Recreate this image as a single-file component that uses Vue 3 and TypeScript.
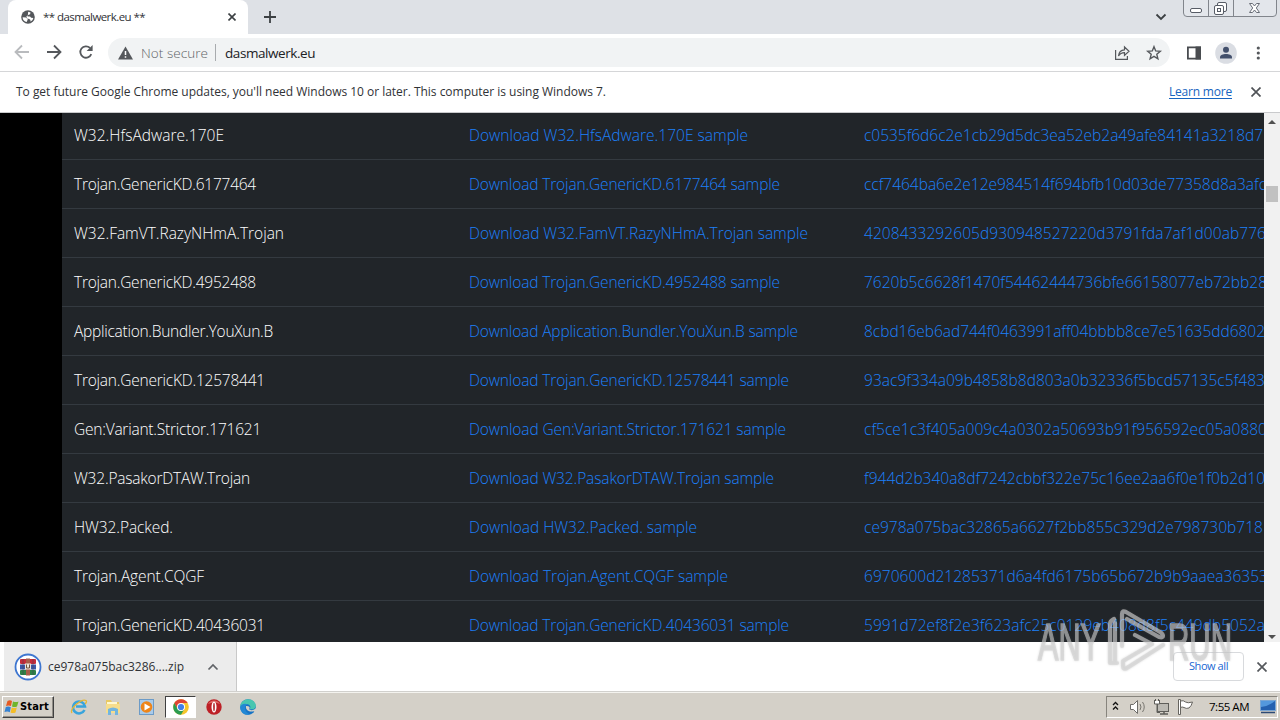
<script setup lang="ts">
interface Sample { name: string; nameW: number; dlW: number; hash: string; hashW: number }

const samples: Sample[] = [
  { name: 'W32.HfsAdware.170E', nameW: 150, dlW: 279, hash: 'c0535f6d6c2e1cb29d5dc3ea52eb2a49afe84141a3218d7', hashW: 399 },
  { name: 'Trojan.GenericKD.6177464', nameW: 182, dlW: 311, hash: 'ccf7464ba6e2e12e984514f694bfb10d03de77358d8a3afc', hashW: 402 },
  { name: 'W32.FamVT.RazyNHmA.Trojan', nameW: 210, dlW: 339, hash: '4208433292605d930948527220d3791fda7af1d00ab776', hashW: 402 },
  { name: 'Trojan.GenericKD.4952488', nameW: 182, dlW: 311, hash: '7620b5c6628f1470f54462444736bfe66158077eb72bb28', hashW: 403 },
  { name: 'Application.Bundler.YouXun.B', nameW: 199, dlW: 329, hash: '8cbd16eb6ad744f0463991aff04bbbb8ce7e51635dd6802', hashW: 401 },
  { name: 'Trojan.GenericKD.12578441', nameW: 191, dlW: 320, hash: '93ac9f334a09b4858b8d803a0b32336f5bcd57135c5f483', hashW: 401 },
  { name: 'Gen:Variant.Strictor.171621', nameW: 187, dlW: 317, hash: 'cf5ce1c3f405a009c4a0302a50693b91f956592ec05a0880', hashW: 403 },
  { name: 'W32.PasakorDTAW.Trojan', nameW: 176, dlW: 305, hash: 'f944d2b340a8df7242cbbf322e75c16ee2aa6f0e1f0b2d10', hashW: 401 },
  { name: 'HW32.Packed.', nameW: 99, dlW: 228, hash: 'ce978a075bac32865a6627f2bb855c329d2e798730b718', hashW: 399 },
  { name: 'Trojan.Agent.CQGF', nameW: 130, dlW: 259, hash: '6970600d21285371d6a4fd6175b65b672b9b9aaea36353', hashW: 404 },
  { name: 'Trojan.GenericKD.40436031', nameW: 191, dlW: 320, hash: '5991d72ef8f2e3f623afc25c0129eb408d8f5c449db5052a', hashW: 401 },
]

// Tracks a label so that it occupies the given width.
const vFit = {
  mounted(el: HTMLElement, binding: { value: number }) {
    const natural = el.getBoundingClientRect().width
    const count = (el.textContent || '').length
    el.style.letterSpacing = `${(binding.value - natural) / count}px`
  },
}
</script>

<template>
  <div class="screen">
    <header class="tabs">
      <div class="tab">
        <svg class="globe" width="14" height="14" viewBox="0 0 14 14"><circle cx="7" cy="7" r="6.8" fill="#54575b" /><path d="M1.6 7.2 5 7.600l1.800 1.600-1.100 2.700C3.400 11.700 1.700 10 1.600 7.200zM7.200 1.700l2.300.8-.4 1.800-2 .6-.6 1.600 2.500.1 1.200 1.200 2.100.2c-.3 1.600-1.400 3-3 3.600l.2-1.600-1.300-1.100-2-.4-.9-2 1.500-1.100z" fill="#fff" /></svg>
        <span class="tabtext"><span v-fit="102">** dasmalwerk.eu **</span></span>
        <svg class="tabx" width="8" height="8" viewBox="0 0 8 8"><path d="m.5.5 7 7m0-7-7 7" stroke="#3c4043" stroke-width="1.6" /></svg>
      </div>
      <svg class="plus" width="12" height="12" viewBox="0 0 12 12"><path d="M6 0v12M0 6h12" stroke="#3c4043" stroke-width="1.8" /></svg>
      <svg class="caret" width="12" height="8" viewBox="0 0 12 8"><path d="m1.5 1.5 4.5 4.5 4.5-4.5" fill="none" stroke="#3c4043" stroke-width="1.8" /></svg>
      <svg class="winbtns" width="94" height="18" viewBox="0 0 94 18">
        <path d="M.5 0v13q0 3.5 3.500 3.500h86q3.500 0 3.500-3.500V0M25.500 0v16M50.500 0v16" fill="#e3e6eb" stroke="#81858c" />
        <rect x="7.500" y="8.500" width="11" height="4" rx="1.500" fill="#fff" stroke="#575c66" />
        <rect x="34.500" y="2.500" width="9" height="9" rx="1.500" fill="#fff" stroke="#575c66" /><rect x="31.500" y="5.500" width="9" height="9" rx="1.500" fill="#fff" stroke="#575c66" /><rect x="34.500" y="8.500" width="3" height="3" fill="none" stroke="#575c66" />
        <path d="m66.500 3.500 3 0 2 2.500 2-2.500h3l-3.200 4.500 3.200 4.500h-3l-2-2.500-2 2.500h-3l3.200-4.500z" fill="#fff" stroke="#686d77" />
      </svg>
    </header>

    <div class="toolbar">
      <svg class="nav" width="100" height="38" viewBox="0 0 100 38" fill="none" stroke-width="1.800">
        <path d="M29 18H16M22 11.500 15.500 18l6.500 6.500" stroke="#b9bbbe" />
        <path d="M47 18h13M54 11.500 60.500 18 54 24.500" stroke="#55585c" />
        <path d="M91.300 20.200A5.700 5.700 0 1 1 90 13.900" stroke="#55585c" /><path d="M92.600 11v6h-6z" fill="#55585c" />
      </svg>
      <div class="omnibox">
        <svg class="warn" width="15" height="14" viewBox="0 0 15 14"><path d="M7.500.5 15 13.500H0z" fill="#55585c" /><path d="M7.500 5v4M7.500 10.200v1.600" stroke="#fff" stroke-width="1.500" /></svg>
        <span class="secure"><span v-fit="67">Not secure</span></span>
        <i class="bar"></i>
        <span class="url"><span v-fit="90">dasmalwerk.eu</span></span>
        <svg class="share" width="50" height="18" viewBox="0 0 50 18" fill="none" stroke="#55585c" stroke-width="1.200">
          <path d="M1.600 6v9.400h11.800V12M4.500 12c.4-4 2.500-6 6-6.200V3l4.500 4.200-4.500 4.200V8.700C8 8.700 6 9.500 4.500 12z" />
          <path d="m40 2.700 1.700 4.200 4.600.4-3.500 3 1.100 4.500-3.900-2.400-3.900 2.400 1.100-4.500-3.500-3 4.600-.4z" stroke-width="1.400" />
        </svg>
      </div>
      <svg class="actions" width="84" height="26" viewBox="0 0 84 26">
        <path d="M5.900 7.400h12.200v11.200H5.900z" fill="none" stroke="#494c50" stroke-width="1.800" /><path d="M13.500 6.500h5.500v13h-5.500z" fill="#494c50" />
        <circle cx="44" cy="13" r="10.800" fill="#dadde3" /><circle cx="44" cy="9.700" r="3" fill="#43506c" /><path d="M38 18.500v-1.300c0-4.300 12-4.300 12 0v1.300z" fill="#43506c" />
        <g fill="#55585c"><circle cx="76.300" cy="8" r="1.600" /><circle cx="76.300" cy="13" r="1.600" /><circle cx="76.300" cy="18" r="1.600" /></g>
      </svg>
    </div>

    <div class="info">
      <span class="infotext"><span v-fit="590">To get future Google Chrome updates, you'll need Windows 10 or later. This computer is using Windows 7.</span></span>
      <a class="learn"><span v-fit="63">Learn more</span></a>
      <svg class="infox" width="10" height="10" viewBox="0 0 10 10"><path d="m.5.5 9 9m0-9-9 9" stroke="#505357" stroke-width="1.700" /></svg>
    </div>

    <main class="page">
      <div class="table">
        <div v-for="s in samples" :key="s.hash" class="row">
          <span class="cell"><span v-fit="s.nameW">{{ s.name }}</span></span>
          <a class="cell"><span v-fit="s.dlW">Download {{ s.name }} sample</span></a>
          <a class="cell"><span v-fit="s.hashW">{{ s.hash }}</span></a>
        </div>
      </div>
      <div class="scroll">
        <svg width="16" height="16" viewBox="0 0 16 16"><path d="m4 11 4-4 4 4z" fill="#505050" /></svg>
        <i class="thumb"></i>
        <svg class="down" width="16" height="16" viewBox="0 0 16 16"><path d="m4 9 4 4 4-4z" fill="#505050" /></svg>
      </div>
    </main>

    <div class="shelf">
      <div class="item">
        <svg width="28" height="28" viewBox="0 0 28 28">
          <circle cx="14" cy="14" r="12.500" fill="#fff" stroke="#3e76d0" stroke-width="1.800" />
          <rect x="6" y="6" width="16" height="5" rx="1" fill="#c52c3b" /><rect x="6" y="11.500" width="16" height="5" fill="#3c59a8" /><rect x="6" y="17" width="16" height="5" rx="1" fill="#2e8247" />
          <path d="M9 6v16M19 6v16" stroke="#433c50" opacity=".5" /><rect x="12" y="5.500" width="4" height="17" fill="#a85d4a" /><rect x="11" y="10.500" width="6" height="6" fill="#ece5d8" /><path d="M12.500 11.500v3.500h3v-3.500" fill="none" stroke="#71503c" />
        </svg>
        <span class="file"><span v-fit="136">ce978a075bac3286....zip</span></span>
        <svg class="chev" width="12" height="8" viewBox="0 0 12 8"><path d="m1.500 6.500 4.500-4.500 4.500 4.500" fill="none" stroke="#606367" stroke-width="1.700" /></svg>
      </div>
      <button class="all"><span v-fit="39">Show all</span></button>
      <svg class="shelfx" width="10" height="10" viewBox="0 0 10 10"><path d="m.5.5 9 9m0-9-9 9" stroke="#55585c" stroke-width="1.700" /></svg>
    </div>

    <footer class="taskbar">
      <div class="start">
        <svg width="16" height="16" viewBox="0 0 16 16"><path d="M3.500 2Q6 .5 8 2L7 7Q4.500 5.800 2 7z" fill="#e65a22" /><path d="M9 2.500q3 1 5.500 0l-1.500 5q-2.500 1-5 0z" fill="#70b52c" /><path d="M1.800 8q2.500-1 5 .2l-1 5Q3.500 11.800.5 13z" fill="#3582d2" /><path d="M7.800 8.500q2.500 1 5 0l-1.300 5q-2.500 1-5 0z" fill="#f4bd27" /></svg>
        <b v-fit="29">Start</b>
      </div>
      <div class="app">
        <svg width="18" height="18" viewBox="0 0 18 18"><path d="M14.500 12A6 6 0 1 1 15 8.500H6" fill="none" stroke="#38a4dc" stroke-width="2.500" /><path d="M2 15C-1 11 12 0 16 2.500c1 .8.300 2.200-.8 3.500" fill="none" stroke="#e5b733" stroke-width="1.300" /></svg>
      </div>
      <div class="app">
        <svg width="18" height="18" viewBox="0 0 18 18"><path d="M2 2h5l1 2h7v10H2z" fill="#e8c964" /><path d="M3 4h10v2H3z" fill="#fff8cf" /><path d="M2 6h14v9H2z" fill="#f6dd8c" /><path d="M4 17v-6q5-3 10 0v6h-3v-4H7v4z" fill="#72b5df" /></svg>
      </div>
      <div class="app">
        <svg width="18" height="18" viewBox="0 0 18 18"><rect x="1.500" y="1.500" width="14" height="15" fill="#a9cbea" stroke="#6c9bc7" /><circle cx="8.500" cy="9" r="5.800" fill="#ee8519" /><path d="m6.500 5.500 6 3.500-6 3.500z" fill="#fff" /></svg>
      </div>
      <div class="app active">
        <svg width="18" height="18" viewBox="0 0 18 18"><circle cx="9" cy="9" r="7.800" fill="#f5c52b" /><path d="M2.250 5.100A7.800 7.800 0 0 1 15.750 5.100H9L5.600 11z" fill="#df4435" /><path d="M2.250 5.100A7.800 7.800 0 0 0 9 16.800l3.400-5.800L5.600 11z" fill="#2c9c50" /><circle cx="9" cy="9" r="4" fill="#fff" /><circle cx="9" cy="9" r="3.100" fill="#4180e8" /></svg>
      </div>
      <div class="app">
        <svg width="18" height="18" viewBox="0 0 18 18"><circle cx="9" cy="9" r="7.700" fill="#bd2026" /><path d="M3 6a7 7 0 0 1 12 0Q9 3 3 6z" fill="#dd6865" /><ellipse cx="9" cy="9" rx="2.500" ry="5.500" fill="#fff" /><ellipse cx="9" cy="9" rx=".8" ry="4.200" fill="#ad161d" /></svg>
      </div>
      <div class="app">
        <svg width="18" height="18" viewBox="0 0 18 18"><circle cx="9" cy="9" r="7.800" fill="#1673c5" /><path d="M1.200 9C1 5 4.500 1.200 9 1.200c5 0 8 3.600 7.800 6.700-.2 2.800-3.300 4.200-6 3 1.800-2.800-.7-5-3.800-4.700C4.200 6.500 2 7.500 1.200 9z" fill="#48c6b0" /><path d="M7 8c-.8 4 3 6.500 8 5.200l1.500 1.300L18 9.500l-1.700 1.300c-2 1.800-5 1.600-6.300.5 1.500-2.100.2-3.700-3-3.300z" fill="#d4d0c8" /><path d="M1.300 9c1-3.500 5-4 7-2.500C5 7 5 14 11 16.500 5 18 1 14 1.300 9z" fill="#2388d4" /></svg>
      </div>
      <div class="tray">
        <svg width="92" height="20" viewBox="0 0 92 20">
          <path d="m6 8 2.500-2.500L11 8M6 12.500 8.500 10l2.500 2.500" fill="none" stroke="#111" stroke-width="1.300" />
          <path d="M23.500 7.500h3l4-4v13l-4-4h-3z" fill="#fff" stroke="#6e6d6a" /><path d="M33 7q2 3 0 6M35.500 5q3.500 5 0 10" fill="none" stroke="#77756f" />
          <rect x="50.500" y="6.500" width="11" height="8" fill="#bcbab4" stroke="#5f5e5a" /><path d="M53 17h8M57 14v3" stroke="#5f5e5a" stroke-width="1.500" /><path d="M48 4h4v3h-4z" fill="#fff" /><path d="M47.500 3v4h5V3M50 7v8.500h3M48.500 2v2M51.500 2v2" fill="none" stroke="#5f5e5a" />
          <path d="M71.500 17.500v-15h2v15z" fill="#fff" stroke="#66645f" /><path d="M73.500 4q3-1 5 1 2 1.500 7 0-1 4-3.500 6-3 1-5-.5-2-1-3.500 0z" fill="#fff" stroke="#66645f" />
        </svg>
        <span class="clock"><span v-fit="40">7:55 AM</span></span>
        <svg class="desk" width="16" height="14" viewBox="0 0 16 14"><rect x=".5" y=".5" width="15" height="10" fill="#2561b0" stroke="#7ba6d3" /><path d="M1 7q8-1 14-6H1z" fill="#5498dd" /><path d="M1 12.500h14" stroke="#2c4a75" stroke-width="1.500" /></svg>
      </div>
    </footer>

    <svg class="mark" width="210" height="70" viewBox="0 0 210 70">
      <g fill="#cfcfcf" stroke="#cfcfcf" stroke-width="1.600" font-family="Liberation Sans, sans-serif" font-size="51" opacity=".6">
        <text x="9" y="54" textLength="63" lengthAdjust="spacingAndGlyphs">ANY</text>
        <text x="139" y="54" textLength="64" lengthAdjust="spacingAndGlyphs">RUN</text>
      </g>
      <path d="M88 57H81V18q0-3 4-5M86 17v38M93 40V8q0-4 4-2l34 20q3 2 3 4t-4 1L98 13M134 39l-36 23q-4 2-4-2v-5l29-17-17-9" fill="none" stroke="#d2d2d2" stroke-width="4.200" stroke-linejoin="round" stroke-linecap="round" opacity=".63" />
    </svg>
  </div>
</template>

<style scoped>
* { box-sizing: border-box; }
.screen { position: relative; width: 1280px; height: 720px; overflow: hidden; display: flex; flex-direction: column; background: #fff; font: 12px/16px "Open Sans", "Noto Sans", sans-serif; color: #303236; white-space: nowrap; }
.screen span > span { display: inline-block; }
svg { display: block; flex: none; }
.tabs { height: 34px; flex: none; background: #dee1e6; display: flex; padding-left: 8px; align-items: flex-start; }
.tab { width: 240px; height: 34px; border-radius: 8px 8px 0 0; background: #fff; display: flex; align-items: center; padding: 0 12px 0 13px; }
.tabtext { margin-left: 8px; flex: 1; font-size: 11.5px; }
.plus { margin: 11px 0 0 16px; }
.caret { margin: 13px 16px 0 auto; }
.winbtns { margin-right: 3px; }
.toolbar { height: 38px; flex: none; display: flex; align-items: center; border-bottom: 1px solid #d5d6d8; }
.nav { margin-right: 8px; }
.omnibox { height: 29px; width: 1062px; border-radius: 15px; background: #f1f3f4; display: flex; align-items: center; padding-left: 10px; }
.secure { margin-left: 8px; width: 74px; font-size: 13.5px; color: #5f6367; font-weight: 300; }
.bar { width: 1px; height: 17px; background: #a8abae; margin-right: 9px; }
.url { font-size: 13.5px; color: #202124; }
.share { margin: 0 6px 0 auto; }
.actions { margin-left: 12px; }
.info { height: 41px; flex: none; border-bottom: 1px solid #c9cacc; display: flex; align-items: center; padding: 0 19px 0 16px; }
.learn { margin-left: auto; color: #1764c0; }
.learn span { display: inline-block; text-decoration: underline; text-underline-offset: 2px; }
.infox { margin-left: 19px; }
.page { height: 529px; flex: none; display: flex; overflow: hidden; background: #000; padding-left: 62px; }
.table { width: 1202px; margin-top: -2px; height: 531px; overflow: hidden; background: #212529; }
.row { height: 49px; border-bottom: 1px solid #343a40; display: grid; grid-template-columns: 395px 395px 412px; align-items: center; }
.cell { padding-left: 12px; overflow: hidden; font: 300 15.5px/24px "Open Sans", "Noto Sans", sans-serif; color: #fff; }
.cell span { display: inline-block; }
a.cell { color: #1d80fa; }
.scroll { width: 16px; background: #f1f1f1; display: flex; flex-direction: column; }
.thumb { width: 12px; height: 16px; margin: 57px 2px 0; background: #c1c1c1; }
.down { margin-top: auto; }
.shelf { height: 50px; flex: none; display: flex; align-items: center; padding: 0 13px 0 4px; border-bottom: 1px solid #d1d0cd; }
.item { width: 233px; height: 49px; background: #ececec; border-right: 1px solid #c9c9c9; display: flex; align-items: center; padding-left: 10px; }
.file { margin: 0 22px 0 6px; width: 137px; }
.all { margin-left: auto; width: 71px; height: 29px; border: 1px solid #d8dadd; border-radius: 4px; background: #fff; color: #1967d2; font: 11px/16px "Open Sans", sans-serif; padding: 0 0 2px; }
.all span { display: inline-block; }
.shelfx { margin-left: 13px; }
.taskbar { height: 28px; flex: none; background: #d4d0c8; border-top: 1px solid #f4f3ef; display: flex; align-items: center; padding: 1px 2px 0; }
.start { width: 52px; height: 22px; border: 1px solid; border-color: #fff #404040 #404040 #fff; box-shadow: inset -1px -1px #918e87; display: flex; align-items: center; padding-left: 1px; margin-right: 8px; color: #000; }
.start b { font: 700 11px/16px "DejaVu Sans Condensed", sans-serif; }
.app { width: 34px; height: 22px; display: grid; place-items: center; }
.app.active { width: 31px; margin: 0 1px; background: #fff; border: 1px solid; border-color: #404040 #fff #fff #404040; }
.tray { margin-left: auto; width: 172px; height: 22px; border: 1px solid; border-color: #87847d #fff #fff #87847d; display: flex; align-items: center; }
.clock { margin-left: 10px; width: 51px; color: #000; font-size: 11.5px; }
.mark { position: absolute; left: 1029px; top: 606px; filter: drop-shadow(0 0 1px rgba(100, 100, 100, .35)); }
</style>

<style>
body { margin: 0; overflow: hidden; }
</style>
